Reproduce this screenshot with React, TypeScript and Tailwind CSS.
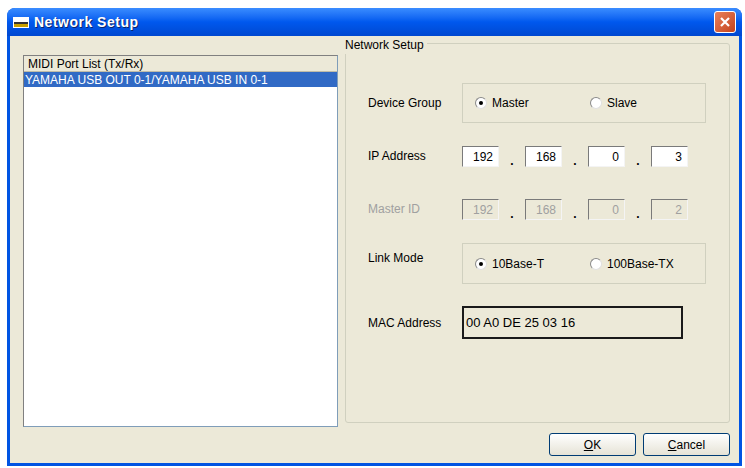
import React from 'react';

const font = { fontFamily: '"Liberation Sans", Arial, sans-serif' };

const Radio = ({ checked, label }: { checked?: boolean; label: string }) => (
  <div className="flex items-center gap-[5px]">
    <div className="w-[12px] h-[12px] rounded-full bg-white border border-[#8a8a8a] border-r-[#e0e0e0] border-b-[#e0e0e0] flex items-center justify-center">
      {checked && <div className="w-[4px] h-[4px] rounded-full bg-black" />}
    </div>
    <span>{label}</span>
  </div>
);

const Octet = ({ v, disabled }: { v: string; disabled?: boolean }) => (
  <div className={`w-[37px] h-[21px] border border-[#7a7a7a] border-r-[#f4f4f4] border-b-[#f4f4f4] flex items-center justify-end pr-[5px] ${disabled ? 'bg-[#ece9d8] text-[#a0a0a0]' : 'bg-white text-black'}`}>{v}</div>
);

const IpRow = ({ vals, disabled }: { vals: string[]; disabled?: boolean }) => (
  <div className="flex items-end">
    {vals.map((v, i) => (
      <React.Fragment key={i}>
        <Octet v={v} disabled={disabled} />
        {i < 3 && <div className="w-[26px] text-center leading-none text-black font-bold">.</div>}
      </React.Fragment>
    ))}
  </div>
);

export default function App() {
  return (
    <div className="w-[745px] h-[468px] bg-white pt-[8px] pl-[7px] text-[12px]" style={font}>
      <div className="w-[735px] h-[458px] rounded-t-[8px] bg-[#0054e3] flex flex-col overflow-hidden">
        <div className="h-[28px] flex items-center px-[6px] bg-gradient-to-b from-[#3a8cff] via-[#0058ee] to-[#0048d0]">
          <div className="w-[16px] h-[11px] bg-[#333] border border-white flex flex-col justify-between mr-[5px]">
            <div className="h-[4px] bg-white" />
            <div className="h-[3px] bg-[#c8a000]" />
          </div>
          <span className="text-white font-bold text-[14px] tracking-[0.5px]" style={{ textShadow: '1px 1px #0a246a' }}>Network Setup</span>
          <div className="ml-auto w-[22px] h-[22px] rounded-[3px] border border-white bg-gradient-to-br from-[#e8805a] to-[#c4421a] flex items-center justify-center">
            <svg width="12" height="12" viewBox="0 0 12 12"><path d="M2 2L10 10M10 2L2 10" stroke="white" strokeWidth="2.2" /></svg>
          </div>
        </div>
        <div className="flex-1 mx-[3px] mb-[3px] bg-[#ece9d8] relative pt-[19px] pl-[13px] flex">
          <div className="w-[315px] h-[372px] bg-white border border-[#7f9db9] border-l-[#808080] border-t-[#808080]">
            <div className="h-[16px] bg-[#ece9d8] border-b border-[#c0bca8] pl-[4px] flex items-center">MIDI Port List (Tx/Rx)</div>
            <div className="h-[15px] bg-[#316ac5] text-white pl-[1px] flex items-center">YAMAHA USB OUT 0-1/YAMAHA USB IN 0-1</div>
          </div>
          <div className="ml-[7px] mt-[-12px] w-[385px] h-[380px] border border-[#d0d0bf] rounded-[3px] relative">
            <span className="absolute left-[-1px] top-[-8px] bg-[#ece9d8] pr-[3px]">Network Setup</span>
            <div className="flex flex-col pl-[22px] pt-[55px]">
              <div className="flex items-center h-[40px] -mt-[16px]">
                <div className="w-[94px]">Device Group</div>
                <div className="w-[244px] h-[40px] border border-[#d0d0bf] flex items-center pl-[12px]">
                  <div className="w-[115px]"><Radio checked label="Master" /></div>
                  <Radio label="Slave" />
                </div>
              </div>
              <div className="flex items-start mt-[23px] h-[23px]">
                <div className="w-[94px] pt-[1px]">IP Address</div>
                <IpRow vals={['192', '168', '0', '3']} />
              </div>
              <div className="flex items-start mt-[30px] h-[23px] text-[#a0a0a0]">
                <div className="w-[94px] pt-[1px]">Master ID</div>
                <IpRow vals={['192', '168', '0', '2']} disabled />
              </div>
              <div className="flex items-start mt-[21px]">
                <div className="w-[94px] pt-[6px]">Link Mode</div>
                <div className="w-[244px] h-[41px] border border-[#d0d0bf] flex items-center pl-[12px]">
                  <div className="w-[115px]"><Radio checked label="10Base-T" /></div>
                  <Radio label="100Base-TX" />
                </div>
              </div>
              <div className="flex items-center mt-[22px]">
                <div className="w-[94px]">MAC Address</div>
                <div className="w-[221px] h-[33px] border-2 border-[#1a1a1a] flex items-center pl-[2px] text-[13px]">00 A0 DE 25 03 16</div>
              </div>
            </div>
          </div>
          <div className="absolute right-[9px] bottom-[7px] flex gap-[7px]">
            <button className="w-[87px] h-[23px] border border-[#003c74] rounded-[3px] bg-gradient-to-b from-white to-[#e6e3d6]"><u>O</u>K</button>
            <button className="w-[87px] h-[23px] border border-[#003c74] rounded-[3px] bg-gradient-to-b from-white to-[#e6e3d6]"><u>C</u>ancel</button>
          </div>
        </div>
      </div>
    </div>
  );
}
